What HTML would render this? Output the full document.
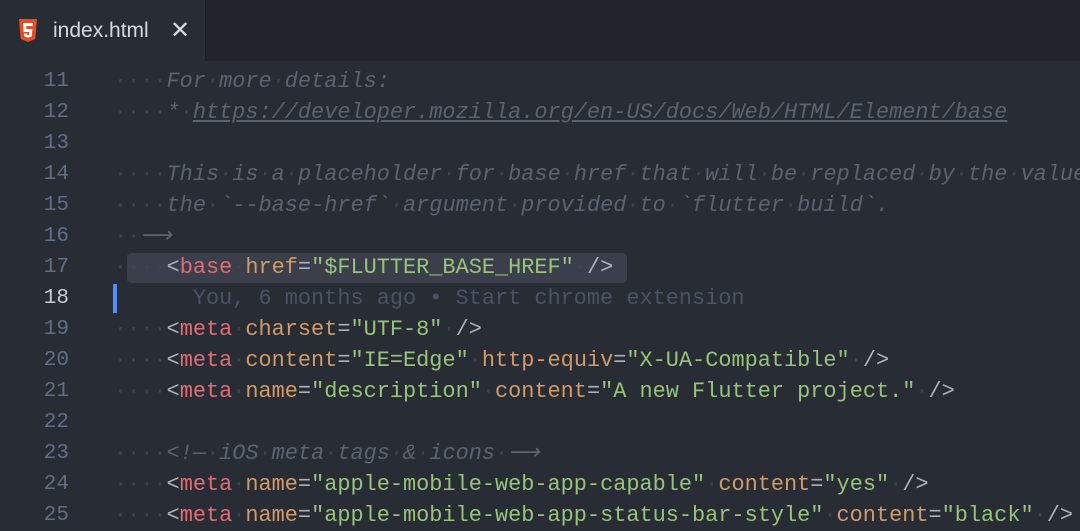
<!DOCTYPE html>
<html><head><meta charset="utf-8"><style>
body{margin:0;width:1080px;height:520px;overflow:hidden;background:#282c34;font-family:"Liberation Mono",monospace;}
.top{position:absolute;left:0;top:0;width:1080px;height:61px;background:#21252b;}
.tab{position:absolute;left:0;top:0;width:205px;height:61px;background:#282c34;border-right:1px solid #1b1e23;}
.tab .t{position:absolute;left:53px;top:19px;font:21px "Liberation Sans",sans-serif;color:#d7dae0;}
.tab .x{position:absolute;left:170px;top:16px;font:24px "Liberation Sans",sans-serif;color:#d7dae0;}
.ln{position:absolute;left:0;width:69px;text-align:right;font-size:21px;color:#636d83;line-height:31px;}
.c{position:absolute;left:114px;white-space:pre;font-size:21.9px;line-height:31px;color:#abb2bf;}
.d{color:#3e4451;}
.cm{color:#5c6370;font-style:italic;}
.u{text-decoration:underline;}
.tg{color:#e06c75;}.at{color:#d19a66;}.s{color:#98c379;}
.hl{position:absolute;left:127px;top:253px;width:500px;height:30px;background:#3a3f4b;border-radius:4px;}
.bar{position:absolute;left:113px;top:284px;width:4px;height:29px;background:#528bff;}
#w{position:absolute;left:0;top:1.5px;width:1080px;height:520px;}
</style></head><body>
<div class="top"><div class="tab">
<svg style="position:absolute;left:18px;top:19px" width="20" height="24" viewBox="0 0 20 24"><path d="M1 0h18l-1.7 20L10 23l-7.3-3z" fill="#e44d26"/><path d="M5 4h10l-.3 3H8.2l.2 3h6l-.7 7.5L10 18.6 6.3 17.5 6 14.5h3l.1 1.3 .9.3 1-.3.2-2.8H5.6z" fill="#fff"/></svg>
<span class="t">index.html</span><span class="x">✕</span></div></div>
<div class="hl"></div><div class="bar"></div>
<div id="w">
<div class="ln" style="top:64.5px">11</div>
<div class="c" style="top:64.5px"><span class="d">····</span><span class="cm">For<span class="d">·</span>more<span class="d">·</span>details:</span></div>
<div class="ln" style="top:95.5px">12</div>
<div class="c" style="top:95.5px"><span class="d">····</span><span class="cm">*<span class="d">·</span><span class="u">https://developer.mozilla.org/en-US/docs/Web/HTML/Element/base</span></span></div>
<div class="ln" style="top:126.5px">13</div>
<div class="ln" style="top:157.5px">14</div>
<div class="c" style="top:157.5px"><span class="d">····</span><span class="cm">This<span class="d">·</span>is<span class="d">·</span>a<span class="d">·</span>placeholder<span class="d">·</span>for<span class="d">·</span>base<span class="d">·</span>href<span class="d">·</span>that<span class="d">·</span>will<span class="d">·</span>be<span class="d">·</span>replaced<span class="d">·</span>by<span class="d">·</span>the<span class="d">·</span>value</span></div>
<div class="ln" style="top:188.5px">15</div>
<div class="c" style="top:188.5px"><span class="d">····</span><span class="cm">the<span class="d">·</span>`--base-href`<span class="d">·</span>argument<span class="d">·</span>provided<span class="d">·</span>to<span class="d">·</span>`flutter<span class="d">·</span>build`.</span></div>
<div class="ln" style="top:219.5px">16</div>
<div class="c" style="top:219.5px"><span class="d">··</span><span class="cm">⟶</span></div>
<div class="ln" style="top:250.5px">17</div>
<div class="c" style="top:250.5px"><span class="d">····</span>&lt;<span class="tg">base</span><span class="d">·</span><span class="at">href</span>=<span class="s">"$FLUTTER_BASE_HREF"</span><span class="d">·</span>/&gt;</div>
<div class="ln" style="top:281.5px;color:#c8ccd4">18</div>
<div class="c" style="top:281.5px;color:#4b5263">      You, 6 months ago • Start chrome extension</div>
<div class="ln" style="top:312.5px">19</div>
<div class="c" style="top:312.5px"><span class="d">····</span>&lt;<span class="tg">meta</span><span class="d">·</span><span class="at">charset</span>=<span class="s">"UTF-8"</span><span class="d">·</span>/&gt;</div>
<div class="ln" style="top:343.5px">20</div>
<div class="c" style="top:343.5px"><span class="d">····</span>&lt;<span class="tg">meta</span><span class="d">·</span><span class="at">content</span>=<span class="s">"IE=Edge"</span><span class="d">·</span><span class="at">http-equiv</span>=<span class="s">"X-UA-Compatible"</span><span class="d">·</span>/&gt;</div>
<div class="ln" style="top:374.5px">21</div>
<div class="c" style="top:374.5px"><span class="d">····</span>&lt;<span class="tg">meta</span><span class="d">·</span><span class="at">name</span>=<span class="s">"description"</span><span class="d">·</span><span class="at">content</span>=<span class="s">"A new Flutter project."</span><span class="d">·</span>/&gt;</div>
<div class="ln" style="top:405.5px">22</div>
<div class="ln" style="top:436.5px">23</div>
<div class="c" style="top:436.5px"><span class="d">····</span><span class="cm">&lt;!—<span class="d">·</span>iOS<span class="d">·</span>meta<span class="d">·</span>tags<span class="d">·</span>&amp;<span class="d">·</span>icons<span class="d">·</span>⟶</span></div>
<div class="ln" style="top:467.5px">24</div>
<div class="c" style="top:467.5px"><span class="d">····</span>&lt;<span class="tg">meta</span><span class="d">·</span><span class="at">name</span>=<span class="s">"apple-mobile-web-app-capable"</span><span class="d">·</span><span class="at">content</span>=<span class="s">"yes"</span><span class="d">·</span>/&gt;</div>
<div class="ln" style="top:498.5px">25</div>
<div class="c" style="top:498.5px"><span class="d">····</span>&lt;<span class="tg">meta</span><span class="d">·</span><span class="at">name</span>=<span class="s">"apple-mobile-web-app-status-bar-style"</span><span class="d">·</span><span class="at">content</span>=<span class="s">"black"</span><span class="d">·</span>/&gt;</div>
</div>
</body></html>
